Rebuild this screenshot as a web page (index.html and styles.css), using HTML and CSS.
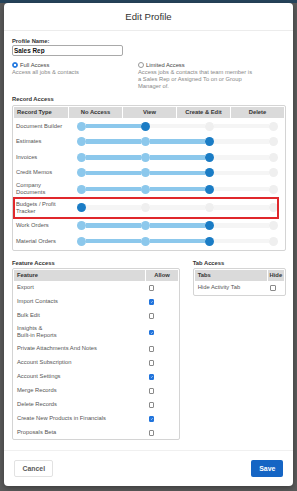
FILE: index.html
```html
<!DOCTYPE html>
<html lang="en">
<head>
    <meta charset="UTF-8">
    <meta name="viewport" content="width=device-width, initial-scale=1.0">
    <title>Edit Profile</title>
    <link rel="stylesheet" href="styles.css">
</head>
<body>
    <div class="modal">
        <div class="modal-header">
            <h1>Edit Profile</h1>
        </div>

        <div class="modal-body">
            <label class="field-label" for="profileName">Profile Name:</label>
            <input class="text-input" id="profileName" type="text" value="Sales Rep">

            <div class="access-options">
                <div class="access-option">
                    <div class="radio-line"><span class="radio checked"></span>Full Access</div>
                    <p class="hint">Access all jobs &amp; contacts</p>
                </div>
                <div class="access-option limited">
                    <div class="radio-line"><span class="radio"></span>Limited Access</div>
                    <p class="hint">Access jobs &amp; contacts that team member is a Sales Rep or Assigned To on or Group Manager of.</p>
                </div>
            </div>

            <h2 class="section-title">Record Access</h2>
            <div class="record-table">
                <div class="record-head">
                    <div>Record Type</div>
                    <div>No Access</div>
                    <div>View</div>
                    <div>Create &amp; Edit</div>
                    <div>Delete</div>
                </div>

                <div class="record-row">
                    <div class="name">Document Builder</div>
                    <div class="slider"><i class="knob on"></i><i class="bar on"></i><i class="knob cur"></i><i class="bar"></i><i class="knob"></i><i class="bar"></i><i class="knob"></i></div>
                </div>
                <div class="record-row">
                    <div class="name">Estimates</div>
                    <div class="slider"><i class="knob on"></i><i class="bar on"></i><i class="knob on"></i><i class="bar on"></i><i class="knob cur"></i><i class="bar"></i><i class="knob"></i></div>
                </div>
                <div class="record-row">
                    <div class="name">Invoices</div>
                    <div class="slider"><i class="knob on"></i><i class="bar on"></i><i class="knob on"></i><i class="bar on"></i><i class="knob cur"></i><i class="bar"></i><i class="knob"></i></div>
                </div>
                <div class="record-row">
                    <div class="name">Credit Memos</div>
                    <div class="slider"><i class="knob on"></i><i class="bar on"></i><i class="knob on"></i><i class="bar on"></i><i class="knob cur"></i><i class="bar"></i><i class="knob"></i></div>
                </div>
                <div class="record-row">
                    <div class="name">Company Documents</div>
                    <div class="slider"><i class="knob on"></i><i class="bar on"></i><i class="knob on"></i><i class="bar on"></i><i class="knob cur"></i><i class="bar"></i><i class="knob"></i></div>
                </div>
                <div class="record-row flagged">
                    <div class="name">Budgets / Profit Tracker</div>
                    <div class="slider"><i class="knob cur"></i><i class="bar"></i><i class="knob"></i><i class="bar"></i><i class="knob"></i><i class="bar"></i><i class="knob"></i></div>
                </div>
                <div class="record-row">
                    <div class="name">Work Orders</div>
                    <div class="slider"><i class="knob on"></i><i class="bar on"></i><i class="knob on"></i><i class="bar on"></i><i class="knob cur"></i><i class="bar"></i><i class="knob"></i></div>
                </div>
                <div class="record-row">
                    <div class="name">Material Orders</div>
                    <div class="slider"><i class="knob on"></i><i class="bar on"></i><i class="knob on"></i><i class="bar on"></i><i class="knob cur"></i><i class="bar"></i><i class="knob"></i></div>
                </div>
            </div>

            <div class="lower">
                <div class="feature-block">
                    <h2 class="section-title">Feature Access</h2>
                    <div class="perm-table feature-table">
                        <div class="perm-head"><div>Feature</div><div class="center">Allow</div></div>
                        <div class="perm-row"><span>Export</span><span class="check"></span></div>
                        <div class="perm-row"><span>Import Contacts</span><span class="check on"><svg viewBox="0 0 10 10"><path d="M2.6 5.3l1.7 1.7 3.2-3.8"/></svg></span></div>
                        <div class="perm-row"><span>Bulk Edit</span><span class="check"></span></div>
                        <div class="perm-row"><span>Insights &amp;<br>Built-in Reports</span><span class="check on"><svg viewBox="0 0 10 10"><path d="M2.6 5.3l1.7 1.7 3.2-3.8"/></svg></span></div>
                        <div class="perm-row"><span>Private Attachments And Notes</span><span class="check"></span></div>
                        <div class="perm-row"><span>Account Subscription</span><span class="check"></span></div>
                        <div class="perm-row"><span>Account Settings</span><span class="check on"><svg viewBox="0 0 10 10"><path d="M2.6 5.3l1.7 1.7 3.2-3.8"/></svg></span></div>
                        <div class="perm-row"><span>Merge Records</span><span class="check"></span></div>
                        <div class="perm-row"><span>Delete Records</span><span class="check"></span></div>
                        <div class="perm-row"><span>Create New Products in Financials</span><span class="check on"><svg viewBox="0 0 10 10"><path d="M2.6 5.3l1.7 1.7 3.2-3.8"/></svg></span></div>
                        <div class="perm-row"><span>Proposals Beta</span><span class="check"></span></div>
                    </div>
                </div>

                <div class="tab-block">
                    <h2 class="section-title">Tab Access</h2>
                    <div class="perm-table tab-table">
                        <div class="perm-head"><div>Tabs</div><div class="center">Hide</div></div>
                        <div class="perm-row"><span>Hide Activity Tab</span><span class="check"></span></div>
                    </div>
                </div>
            </div>
        </div>

        <div class="modal-footer">
            <button type="button" class="btn btn-cancel">Cancel</button>
            <button type="button" class="btn btn-save">Save</button>
        </div>
    </div>
</body>
</html>
```

FILE: styles.css
```css
* {
    margin: 0;
    padding: 0;
    box-sizing: border-box;
}

body {
    font-family: "Liberation Sans", Arial, sans-serif;
    font-size: 5.8px;
    line-height: 7px;
    color: #444;
    width: 297px;
    height: 491px;
    overflow: hidden;
    background: linear-gradient(#26445c 0, #26445c 3px, #5b5b5b 3px);
}

.modal {
    margin: 3px 4px 0;
    background: white;
    border-radius: 4px;
    box-shadow: 0 2px 6px rgba(0, 0, 0, 0.35);
}

.modal-header {
    height: 28px;
    border-bottom: 1px solid #ececec;
    display: flex;
    align-items: center;
    justify-content: center;
}

.modal-header h1 {
    font-size: 9.6px;
    line-height: 12px;
    font-weight: normal;
    color: #333;
}

.modal-body {
    padding: 7px 7px 9.4px 8px;
}

.field-label {
    display: block;
    font-weight: bold;
    color: #333;
}

.text-input {
    display: block;
    width: 110.7px;
    height: 10.5px;
    padding: 0 1px;
    border: 0.7px solid #a9a9a9;
    border-radius: 2px;
    font: bold 6.4px "Liberation Sans", Arial, sans-serif;
    color: #111;
}

.access-options {
    display: grid;
    grid-template-columns: 126px 1fr;
    margin-top: 6px;
    line-height: 7.3px;
}

.radio-line {
    display: flex;
    align-items: center;
    gap: 2px;
    color: #444;
}

.radio {
    width: 6px;
    height: 6px;
    border: 0.7px solid #999;
    border-radius: 50%;
    background: white;
}

.radio.checked {
    border-color: #2a7de1;
    background: radial-gradient(circle, white 0 0.9px, #2a7de1 1.2px);
}

.hint {
    color: #888;
}

.limited .hint {
    width: 117px;
}

.section-title {
    font-size: 5.8px;
    line-height: 7px;
    font-weight: bold;
    color: #333;
    margin-top: 5px;
}

.record-table {
    margin-top: 2.6px;
    border: 1px solid #d4d4d4;
    border-radius: 2px;
    padding: 1px;
}

.record-head {
    display: grid;
    grid-template-columns: 54px repeat(4, 1fr);
    column-gap: 1px;
    height: 11px;
    line-height: 11px;
}

.record-head div {
    background: #dadada;
    font-weight: bold;
    color: #333;
    text-align: center;
}

.record-head div:first-child {
    text-align: left;
    padding-left: 3px;
}

.record-row {
    display: flex;
    align-items: center;
    min-height: 15.6px;
    padding: 1.5px 0 1.5px 2px;
    margin-right: 6px;
}

.record-row .name {
    flex: none;
    width: 60.5px;
    padding-right: 8px;
    color: #555;
}

.record-row.flagged {
    padding-top: 3px;
    padding-bottom: 3px;
    outline: 2px solid #e0282c;
    outline-offset: -1px;
}

.slider {
    display: flex;
    align-items: center;
    width: 201px;
}

.knob {
    flex: none;
    width: 9px;
    height: 9px;
    border-radius: 50%;
    background: #efefef;
}

.knob.on {
    background: #8cc8ec;
}

.knob.cur {
    background: #1a7cc5;
}

.bar {
    flex: 1;
    height: 4.5px;
    background: #f5f5f5;
}

.bar.on {
    background: #8cc8ec;
}

.lower {
    display: flex;
    gap: 12.7px;
    margin-top: 4.2px;
}

.feature-block {
    width: 168px;
}

.tab-block {
    width: 93.3px;
}

.perm-table {
    margin-top: 0.5px;
    border: 1px solid #d4d4d4;
    border-radius: 2px;
    padding: 1px 1px 0;
}

.tab-table {
    padding-bottom: 0.5px;
}

.perm-head,
.perm-row {
    display: grid;
    column-gap: 1px;
}

.feature-table .perm-head,
.feature-table .perm-row {
    grid-template-columns: 131px 1fr;
}

.tab-table .perm-head,
.tab-table .perm-row {
    grid-template-columns: 72px 1fr;
}

.perm-head {
    height: 11px;
    line-height: 11px;
}

.perm-head div {
    background: #dadada;
    font-weight: bold;
    color: #333;
    padding-left: 3px;
}

.perm-head .center {
    text-align: center;
    padding-left: 0;
}

.perm-row {
    align-items: center;
    min-height: 14px;
    padding: 2.35px 0;
}

.perm-row span:first-child {
    padding-left: 3px;
    color: #555;
}

.check {
    display: block;
    width: 5.6px;
    height: 5.6px;
    margin: 1.4px 0 0 2.7px;
    border: 0.7px solid #8a8a8a;
    border-radius: 1px;
    background: white;
}

.check.on {
    border-color: #2174dc;
    background: #2174dc;
}

.check svg {
    display: block;
    width: 100%;
    height: 100%;
}

.check path {
    fill: none;
    stroke: white;
    stroke-width: 1.6;
}

.modal-footer {
    height: 36px;
    border-top: 1px solid #f0f0f0;
    display: flex;
    align-items: center;
    justify-content: space-between;
    padding: 0 9.7px 0 10.3px;
}

.btn {
    height: 17px;
    border-radius: 2px;
    font: bold 6.9px "Liberation Sans", Arial, sans-serif;
    cursor: pointer;
}

.btn-cancel {
    width: 39px;
    background: white;
    border: 1px solid #e2e2e2;
    color: #5a5a5a;
}

.btn-save {
    width: 32px;
    background: #1565c4;
    border: none;
    color: white;
}
```
